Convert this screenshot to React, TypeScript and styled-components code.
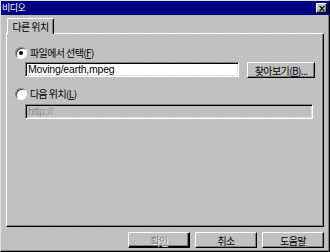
import React from "react";
import styled, { createGlobalStyle, css } from "styled-components";

const Global = createGlobalStyle`
  html, body { margin: 0; padding: 0; background: #c0c0c0; }
  body { font-family: "Noto Sans CJK KR", "Noto Sans", sans-serif; font-size: 10px; }
  * { box-sizing: border-box; }
`;

const Window = styled.div`
  width: 330px;
  height: 252px;
  background-color: #c0c0c0;
  background-image: radial-gradient(circle, #cacaca 0.6px, transparent 0.7px);
  background-size: 3px 3px;
  border-top: 1px solid #dfdfdf;
  border-left: 1px solid #dfdfdf;
  border-right: 1px solid #000;
  border-bottom: 1px solid #000;
  box-shadow: inset -1px -1px 0 #808080;
  display: flex;
  flex-direction: column;
  white-space: nowrap;
`;

const TitleBar = styled.div`
  height: 14px;
  flex: none;
  background: #000080;
  color: #fff;
  display: flex;
  align-items: center;
  justify-content: space-between;
  padding: 0 2px 0 1px;
  font-size: 9px;
  letter-spacing: -0.5px;
  line-height: 14px;
`;

const CloseBtn = styled.div`
  width: 11px;
  height: 10px;
  background: #c0c0c0;
  border-top: 1px solid #fff;
  border-left: 1px solid #fff;
  border-right: 1px solid #000;
  border-bottom: 1px solid #000;
  box-shadow: inset -1px -1px 0 #808080;
  display: flex;
  align-items: center;
  justify-content: center;
`;

const Body = styled.div`
  flex: 1;
  display: flex;
  flex-direction: column;
  padding: 3px 5px 0 5px;
`;

const TabRow = styled.div`
  display: flex;
  height: 15px;
  flex: none;
  padding-left: 1px;
`;

const Tab = styled.div`
  width: 47px;
  height: 16px;
  background: #c0c0c0;
  border-top: 1px solid #fff;
  border-left: 1px solid #fff;
  border-right: 1px solid #000;
  border-radius: 2px 2px 0 0;
  box-shadow: inset -1px 0 0 #808080;
  display: flex;
  align-items: center;
  justify-content: center;
  padding-bottom: 1px;
  font-size: 10px;
  letter-spacing: -0.6px;
  line-height: 13px;
  color: #000;
  position: relative;
  z-index: 1;
`;

const Panel = styled.div`
  height: 194px;
  flex: none;
  border-top: 1px solid #fff;
  border-left: 1px solid #fff;
  border-right: 1px solid #000;
  border-bottom: 1px solid #000;
  box-shadow: inset -1px -1px 0 #808080;
  padding: 12px 0 0 8px;
  display: flex;
  flex-direction: column;
`;

const RadioRow = styled.div`
  display: flex;
  align-items: center;
  height: 14px;
  gap: 3px;
  color: #000;
  font-size: 10px;
  letter-spacing: -0.6px;
  line-height: 14px;
`;

const RadioCircle = styled.div<{ $checked?: boolean }>`
  width: 12px;
  height: 12px;
  flex: none;
  border-radius: 50%;
  background: #fff;
  border-top: 1px solid #808080;
  border-left: 1px solid #808080;
  border-right: 1px solid #fff;
  border-bottom: 1px solid #fff;
  box-shadow: inset 1px 1px 0 #404040;
  display: flex;
  align-items: center;
  justify-content: center;
  &::after {
    content: "";
    width: 4px;
    height: 4px;
    border-radius: 50%;
    background: ${(p) => (p.$checked ? "#000" : "transparent")};
  }
`;

const InputRow = styled.div<{ $mt: number }>`
  display: flex;
  align-items: flex-start;
  margin-left: 10px;
  margin-top: ${(p) => p.$mt}px;
  gap: 8px;
`;

const Field = styled.div<{ $disabled?: boolean; $w: number }>`
  width: ${(p) => p.$w}px;
  height: 15px;
  flex: none;
  border-top: 1px solid #808080;
  border-left: 1px solid #808080;
  border-right: 1px solid #fff;
  border-bottom: 1px solid #fff;
  box-shadow: inset 1px 1px 0 #000, inset -1px -1px 0 #dfdfdf;
  background: ${(p) => (p.$disabled ? "#c0c0c0" : "#fff")};
  color: ${(p) => (p.$disabled ? "#909090" : "#000")};
  padding: 0 2px;
  font-family: "Liberation Sans", Arial, sans-serif;
  font-size: 10.5px;
  letter-spacing: -0.2px;
  line-height: 13px;
  display: flex;
  align-items: center;
`;

const Button = styled.div<{ $disabled?: boolean; $w: number; $default?: boolean }>`
  width: ${(p) => p.$w}px;
  height: 16px;
  flex: none;
  background: #c0c0c0;
  border-top: 1px solid #fff;
  border-left: 1px solid #fff;
  border-right: 1px solid #000;
  border-bottom: 1px solid #000;
  box-shadow: ${(p) =>
    p.$default ? "inset -1px -1px 0 #000, inset -2px -2px 0 #808080" : "inset -1px -1px 0 #808080"};
  display: flex;
  align-items: center;
  justify-content: center;
  font-size: 10px;
  letter-spacing: -0.6px;
  line-height: 13px;
  color: ${(p) => (p.$disabled ? "#808080" : "#000")};
  ${(p) =>
    p.$disabled &&
    css`
      text-shadow: 1px 1px 0 #fff;
    `}
`;

const Gap = styled.div<{ $h: number }>`
  height: ${(p) => p.$h}px;
  flex: none;
`;

const Footer = styled.div`
  display: flex;
  justify-content: flex-end;
  gap: 5px;
  margin-top: 5px;
`;

const U = styled.span`
  text-decoration: underline;
`;

export default function App() {
  return (
    <>
      <Global />
      <Window>
        <TitleBar>
          <span>비디오</span>
          <CloseBtn>
            <svg width="6" height="5" viewBox="0 0 6 5">
              <path d="M0 0h1.5L3 1.6 4.5 0H6L3.8 2.5 6 5H4.5L3 3.4 1.5 5H0l2.2-2.5z" fill="#000" />
            </svg>
          </CloseBtn>
        </TitleBar>
        <Body>
          <TabRow>
            <Tab>다른 위치</Tab>
          </TabRow>
          <Panel>
            <RadioRow>
              <RadioCircle $checked />
              <span>
                파일에서 선택(<U>F</U>)
              </span>
            </RadioRow>
            <InputRow $mt={2}>
              <Field $w={214}>Moving/earth,mpeg</Field>
              <Button $w={68}>
                찾아보기(<U>B</U>)...
              </Button>
            </InputRow>
            <Gap $h={9} />
            <RadioRow>
              <RadioCircle />
              <span>
                다음 위치(<U>L</U>)
              </span>
            </RadioRow>
            <InputRow $mt={3}>
              <Field $w={288} $disabled>
                http://
              </Field>
            </InputRow>
          </Panel>
          <Footer>
            <Button $w={62} $disabled $default>
              확인
            </Button>
            <Button $w={62}>취소</Button>
            <Button $w={62}>도움말</Button>
          </Footer>
        </Body>
      </Window>
    </>
  );
}
